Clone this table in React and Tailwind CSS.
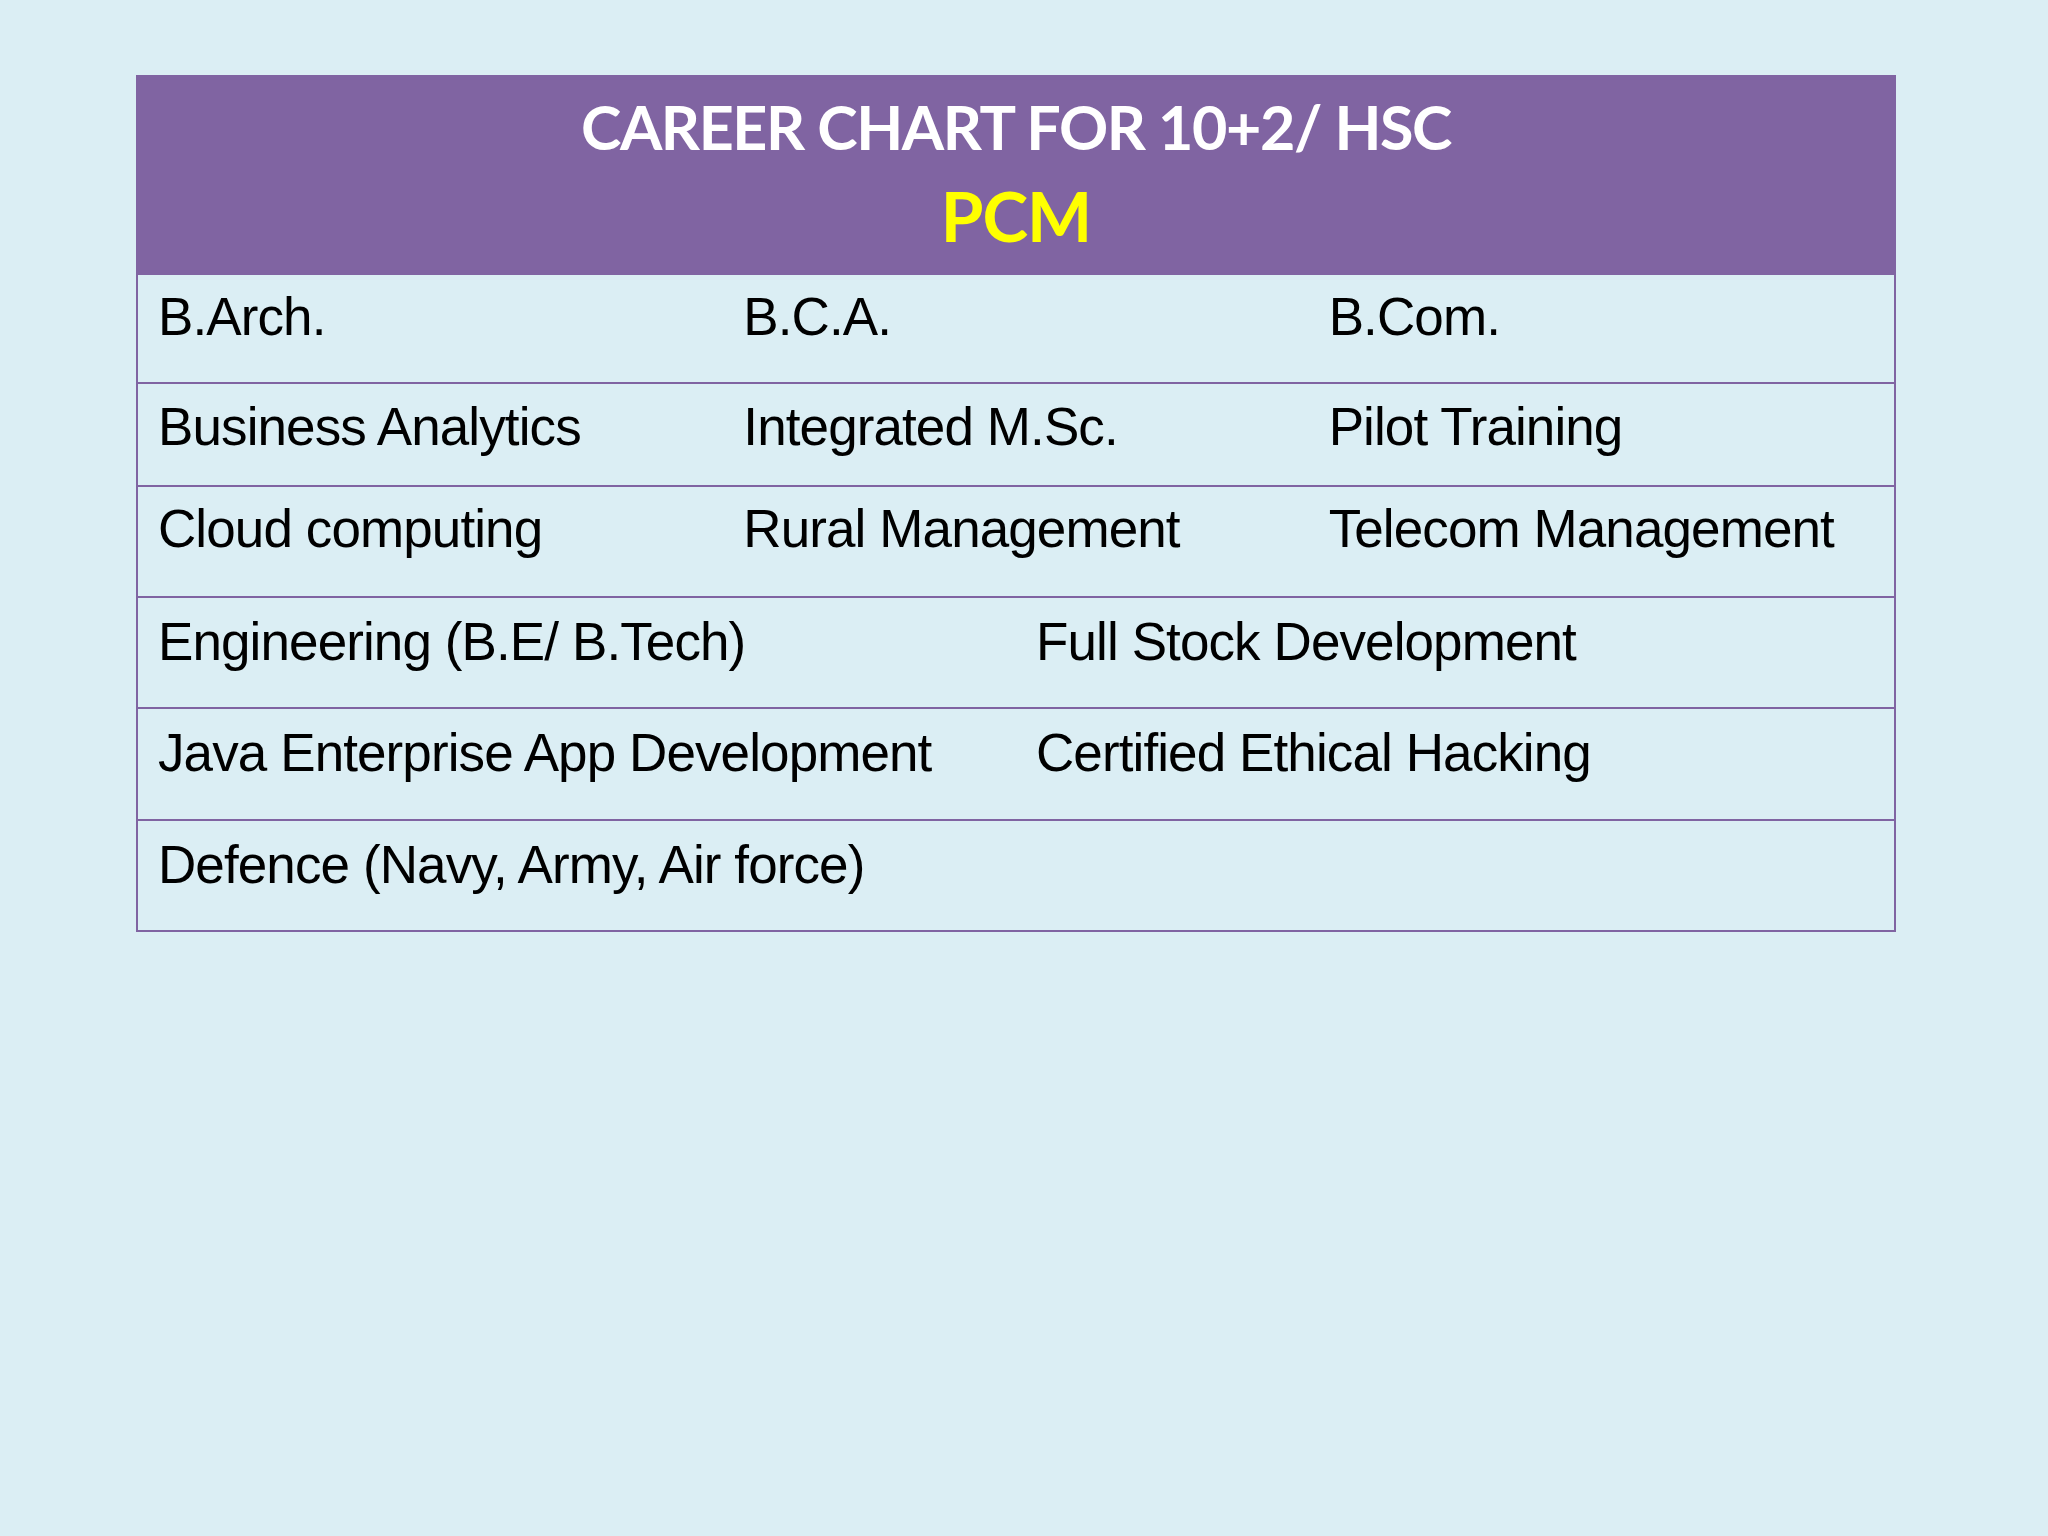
import React from "react";

const ROW_FONT = { fontFamily: '"Liberation Sans", Arial, sans-serif' };

function Cell({ children, className = "" }) {
  return (
    <div className={`pl-[20px] text-[53px] leading-[61px] tracking-[-0.9px] text-black whitespace-nowrap ${className}`} style={ROW_FONT}>
      {children}
    </div>
  );
}

export default function App() {
  return (
    <div className="w-[2048px] h-[1536px] bg-[#dbeef4] pt-[75px] pl-[136px]">
      <div className="w-[1760px] border-2 border-[#8064a2] bg-[#dbeef4]">
        {/* Header */}
        <div
          className="h-[198px] bg-[#8064a2] flex flex-col items-center pt-[14px]"
          style={{ fontFamily: 'Lato, "Open Sans", sans-serif' }}
        >
          <div className="text-white font-bold text-[61px] leading-[72px] tracking-[-1.4px] whitespace-nowrap">
            CAREER CHART FOR 10+2/ HSC
          </div>
          <div className="text-[#ffff00] font-bold text-[69px] leading-[80px] tracking-[-1px] mt-[13px] whitespace-nowrap">
            PCM
          </div>
        </div>

        {/* Row 1 */}
        <div className="grid grid-cols-3 h-[107px] pt-[11px]">
          <Cell>B.Arch.</Cell>
          <Cell>B.C.A.</Cell>
          <Cell>B.Com.</Cell>
        </div>
        {/* Row 2 */}
        <div className="grid grid-cols-3 h-[103px] pt-[12px] border-t-2 border-[#8064a2]">
          <Cell>Business Analytics</Cell>
          <Cell>Integrated M.Sc.</Cell>
          <Cell>Pilot Training</Cell>
        </div>
        {/* Row 3 */}
        <div className="grid grid-cols-3 h-[111px] pt-[11px] border-t-2 border-[#8064a2]">
          <Cell>Cloud computing</Cell>
          <Cell>Rural Management</Cell>
          <Cell>Telecom Management</Cell>
        </div>
        {/* Row 4 */}
        <div className="grid grid-cols-2 h-[111px] pt-[13px] border-t-2 border-[#8064a2]">
          <Cell>Engineering (B.E/ B.Tech)</Cell>
          <Cell>Full Stock Development</Cell>
        </div>
        {/* Row 5 */}
        <div className="grid grid-cols-2 h-[112px] pt-[13px] border-t-2 border-[#8064a2]">
          <Cell>Java Enterprise App Development</Cell>
          <Cell>Certified Ethical Hacking</Cell>
        </div>
        {/* Row 6 */}
        <div className="h-[111px] pt-[13px] border-t-2 border-[#8064a2]">
          <Cell>Defence (Navy, Army, Air force)</Cell>
        </div>
      </div>
    </div>
  );
}
